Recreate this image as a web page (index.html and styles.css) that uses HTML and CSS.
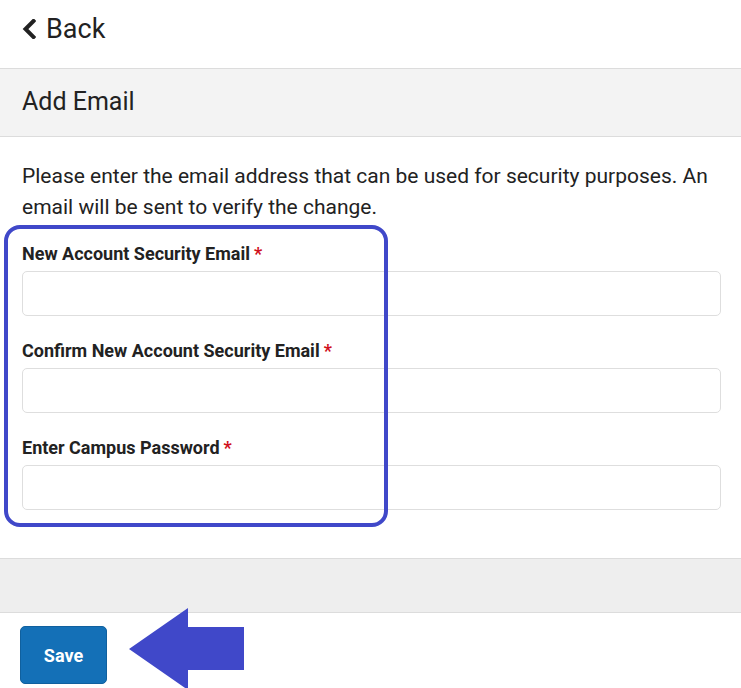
FILE: index.html
```html
<!DOCTYPE html>
<html lang="en">
<head>
<meta charset="utf-8">
<link rel="stylesheet" href="styles.css">
<title>Add Email</title>
</head>
<body>
<div class="page">
  <div class="topbar">
    <a class="back" href="#">
      <svg class="chev" width="14" height="20" viewBox="0 0 14 20"><path d="M11.5 2 L3.5 10 L11.5 18" fill="none" stroke="#222" stroke-width="4" stroke-linecap="square" stroke-linejoin="miter"/></svg>
      <span>Back</span>
    </a>
  </div>
  <div class="titlebar"><h1>Add Email</h1></div>
  <div class="content">
    <p class="intro">Please enter the email address that can be used for security purposes. An email will be sent to verify the change.</p>
    <div class="highlight">
      <div class="field">
        <label>New Account Security Email<span class="req">*</span></label>
        <input type="text">
      </div>
      <div class="field">
        <label>Confirm New Account Security Email<span class="req">*</span></label>
        <input type="text">
      </div>
      <div class="field">
        <label>Enter Campus Password<span class="req">*</span></label>
        <input type="password">
      </div>
    </div>
  </div>
  <div class="grayband"></div>
  <div class="footer">
    <button class="save">Save</button>
    <svg class="arrow" width="116" height="82" viewBox="0 0 116 82"><polygon points="0,41 59,0 59,19 115,19 115,62 59,62 59,82" fill="#4048c9"/></svg>
  </div>
</div>
</body>
</html>
```
FILE: styles.css
```css
html, body { margin: 0; padding: 0; background: #fff; }
body { font-family: Roboto, "Liberation Sans", sans-serif; color: #222; width: 741px; height: 688px; overflow: hidden; }
.page { position: relative; }
.topbar { height: 68px; display: flex; align-items: center; padding-left: 22px; box-sizing: border-box; }
.back { display: flex; align-items: center; gap: 10px; text-decoration: none; color: #222; font-size: 27px; margin-top: -10px; }
.chev { display: block; }
.titlebar { height: 69px; box-sizing: border-box; background: #f3f3f3; border-top: 1px solid #dcdcdc; border-bottom: 1px solid #dcdcdc; display: flex; align-items: center; padding-left: 22px; }
.titlebar h1 { margin: 0; font-size: 25px; font-weight: 400; color: #222; margin-top: -3px; }
.content { padding: 24px 20px 48px 22px; }
.intro { margin: 0; font-size: 21px; line-height: 31px; }
.highlight { position: relative; margin-top: 20px; }
.highlight::before { content: ""; position: absolute; left: -18px; top: -18px; width: 384px; height: 302px; border: 4px solid #4048c9; border-radius: 16px; box-sizing: border-box; pointer-events: none; }
.field { display: flex; flex-direction: column; }
.field + .field { margin-top: 24px; }
.field label { font-weight: 700; font-size: 18px; line-height: 21px; margin-bottom: 7px; color: #222; }
.req { color: #d0101c; margin-left: 4px; }
.field input { height: 45px; box-sizing: border-box; border: 1px solid #dedede; border-radius: 5px; background: #fff; width: 699px; font-size: 16px; padding: 0 10px; }
.grayband { height: 55px; box-sizing: border-box; background: #eeeeee; border-top: 1px solid #dcdcdc; border-bottom: 1px solid #dcdcdc; }
.footer { display: flex; align-items: flex-start; padding-left: 20px; padding-top: 13px; gap: 22px; }
.save { width: 87px; height: 58px; background: #1470b7; color: #fff; border: 1px solid #10609e; border-radius: 5px; font-family: Roboto, "Liberation Sans", sans-serif; font-weight: 700; font-size: 18px; }
.arrow { display: block; margin-top: -18px; }
```
